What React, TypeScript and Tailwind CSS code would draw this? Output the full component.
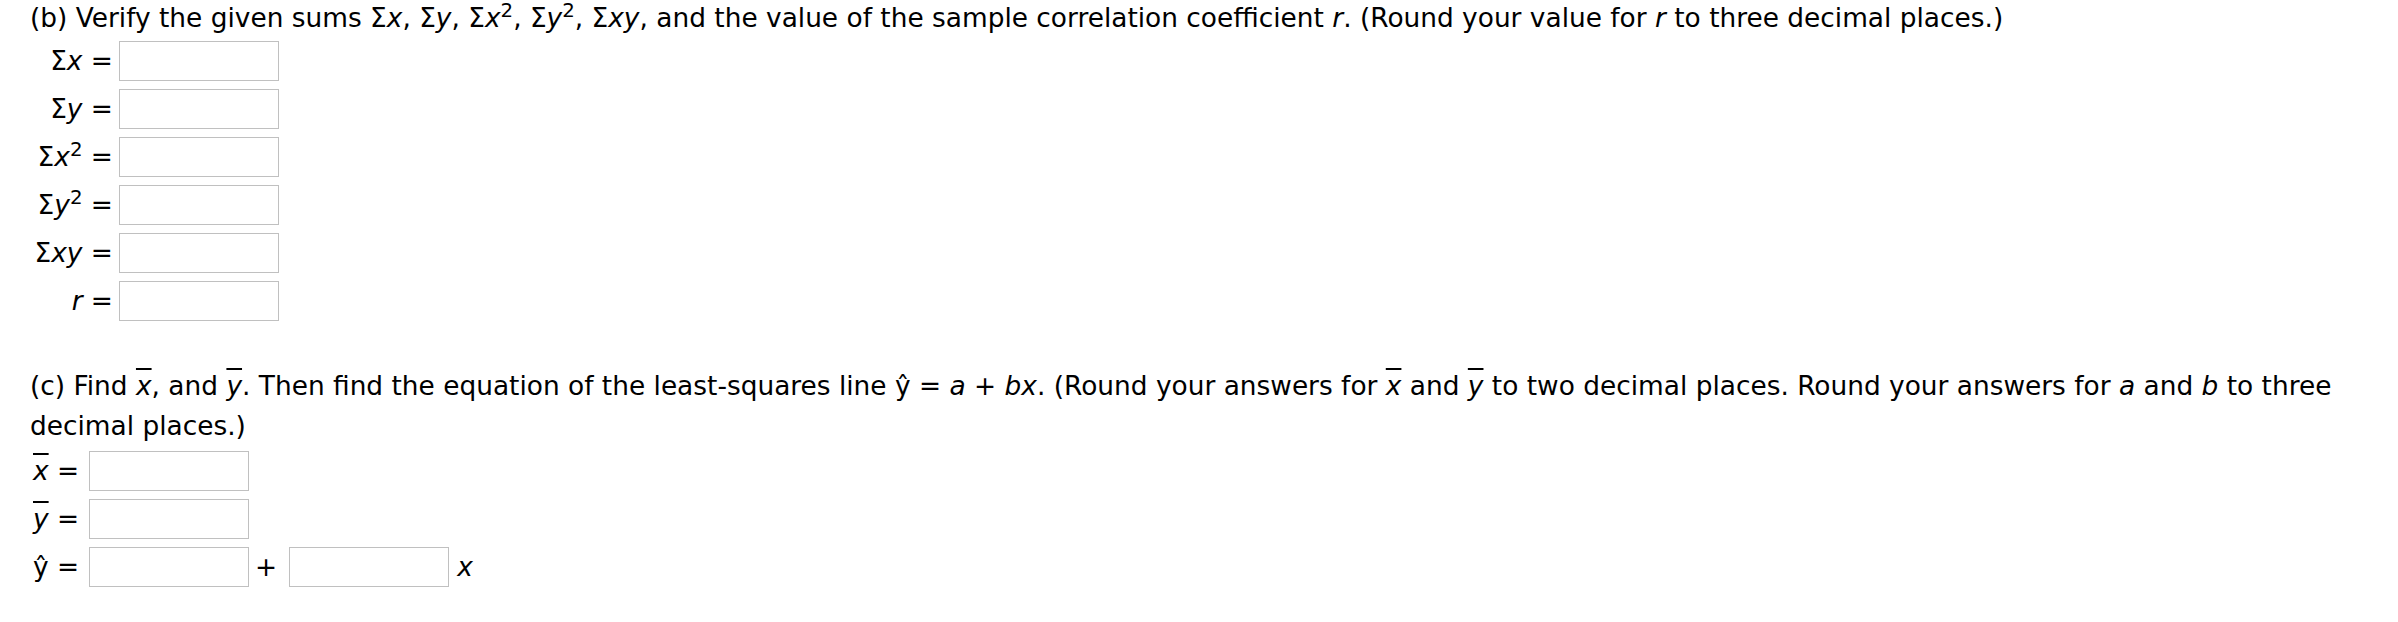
import React from "react";

/**
 * Worksheet part (b) and (c): sums, correlation and least-squares line.
 */

const box = "block w-[160px] h-[40px] border border-[#c0c0c0] bg-white outline-none";

function Bar({ children }: { children: React.ReactNode }) {
  return <i className="overline decoration-2">{children}</i>;
}

const sumRows: React.ReactNode[] = [
  <>Σ<i>x</i></>,
  <>Σ<i>y</i></>,
  <>Σ<i>x</i><sup>2</sup></>,
  <>Σ<i>y</i><sup>2</sup></>,
  <>Σ<i>xy</i></>,
  <><i>r</i></>,
];

export default function App() {
  return (
    <div className="min-h-screen bg-white pl-[30px] text-[26.4px] leading-[40px] text-black font-['DejaVu_Sans',Verdana,sans-serif]">
      {/* Part (b) */}
      <p className="leading-[36px]">
        (b) Verify the given sums Σ<i>x</i>, Σ<i>y</i>, Σ<i>x</i>
        <sup>2</sup>, Σ<i>y</i>
        <sup>2</sup>, Σ<i>xy</i>, and the value of the sample correlation coefficient <i>r</i>. (Round your
        value for <i>r</i> to three decimal places.)
      </p>

      <div className="mt-[5px] flex flex-col gap-[8px]">
        {sumRows.map((label, i) => (
          <div key={i} className="flex h-[40px] items-center">
            <span className="w-[83px] whitespace-nowrap text-right">
              {label} =
            </span>
            <input type="text" className={`ml-[6px] ${box}`} />
          </div>
        ))}
      </div>

      {/* Part (c) */}
      <p className="mt-[45px]">
        (c) Find <Bar>x</Bar>, and <Bar>y</Bar>. Then find the equation of the least-squares line ŷ = <i>a</i> +{" "}
        <i>bx</i>. (Round your answers for <Bar>x</Bar> and <Bar>y</Bar> to two decimal places. Round your answers
        for <i>a</i> and <i>b</i> to three decimal places.)
      </p>

      <div className="mt-[5px] flex flex-col gap-[8px]">
        <div className="flex h-[40px] items-center">
          <span className="ml-[3px] w-[56px] whitespace-nowrap">
            <Bar>x</Bar> =
          </span>
          <input type="text" className={box} />
        </div>
        <div className="flex h-[40px] items-center">
          <span className="ml-[3px] w-[56px] whitespace-nowrap">
            <Bar>y</Bar> =
          </span>
          <input type="text" className={box} />
        </div>
        <div className="flex h-[40px] items-center">
          <span className="ml-[3px] w-[56px] whitespace-nowrap">ŷ =</span>
          <input type="text" className={box} />
          <span className="ml-[6px] mr-[12px]">+</span>
          <input type="text" className={box} />
          <i className="ml-[8px]">x</i>
        </div>
      </div>
    </div>
  );
}
